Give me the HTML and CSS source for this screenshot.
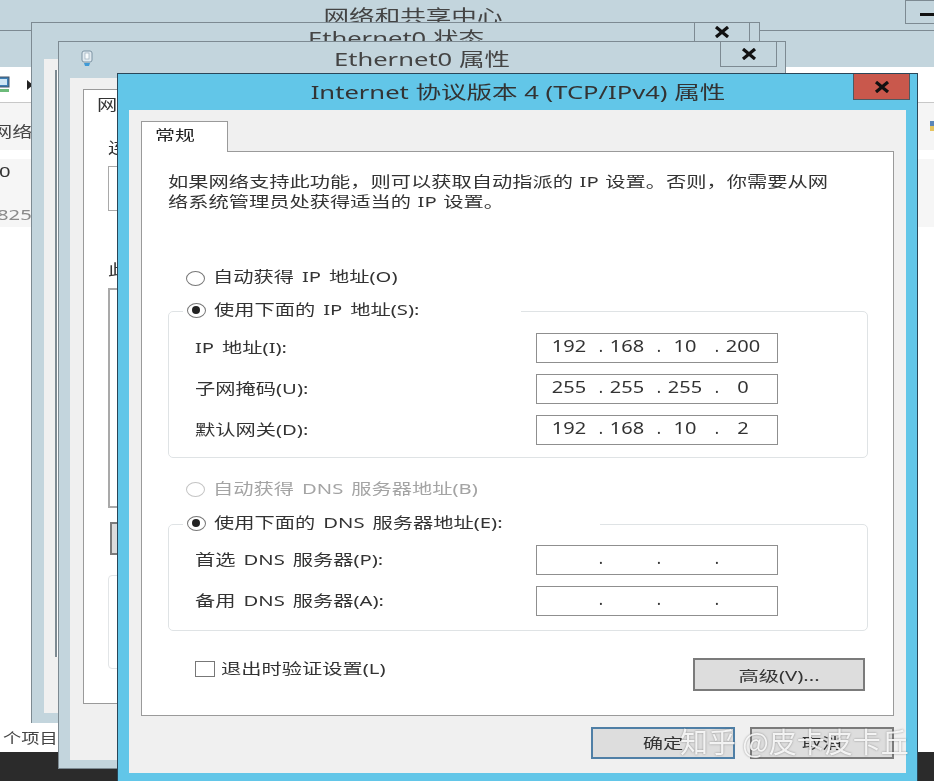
FILE: index.html
```html
<!DOCTYPE html>
<html lang="zh-CN">
<head>
<meta charset="utf-8">
<title>Internet 协议版本 4 (TCP/IPv4) 属性</title>
<link rel="stylesheet" href="styles.css">
</head>
<body>
<div class="desk">

  <section class="win win-top">
    <div class="win-title top-title"><span class="wc">网络和共享中心</span></div>
    <div class="min-btn"><i></i></div>
  </section>

  <section class="win win-explorer">
    <div class="explorer-body">
      <div class="toolbar">
        <svg class="net-icon" viewBox="0 0 14 18"><rect x="0" y="1" width="12" height="10" fill="#3d7fb5" stroke="#456" stroke-width="1"/><rect x="2" y="3" width="8" height="6" fill="#cfe6f5"/><rect x="0" y="13" width="12" height="3" fill="#6dbb7a"/></svg>
        <svg class="crumb" viewBox="0 0 6 10"><path d="M0 0 L6 5 L0 10Z" fill="#222"/></svg>
      </div>
      <div class="band band-a"><span class="w net-label">网络设置</span><svg class="side-icon" viewBox="0 0 4 10"><rect width="4" height="5" fill="#5b86b8"/><rect y="5" width="4" height="5" fill="#e6c45e"/></svg></div>
      <div class="band-b">
        <div class="row-zero"><span class="w">0</span></div>
        <div class="row-num"><span class="w grey">825</span></div>
      </div>
      <div class="grow"></div>
      <div class="status"><span class="w">个项目</span></div>
    </div>
  </section>

  <section class="win win-status">
    <div class="win-title status-title"><span class="wc">Ethernet0 状态</span></div>
    <div class="x-btn status-x"><svg viewBox="0 0 16 12"><path d="M2 1 L14 11 M14 1 L2 11" stroke="#111" stroke-width="3.2"/></svg></div>
    <div class="status-client"><div class="status-panel"></div></div>
  </section>

  <section class="win win-prop">
    <div class="win-title prop-title">
      <svg class="adapter" viewBox="0 0 14 18"><rect x="2" y="1" width="10" height="11" rx="2" fill="#dfe9ef" stroke="#7c93a3"/><rect x="5" y="3" width="4" height="6" fill="#f7fbfd" stroke="#8fa4b2" stroke-width=".6"/><path d="M4 13h6l-1 3H5z" fill="#3f9ad6"/></svg>
      <span class="wc">Ethernet0 属性</span>
    </div>
    <div class="x-btn prop-x"><svg viewBox="0 0 16 12"><path d="M2 1 L14 11 M14 1 L2 11" stroke="#111" stroke-width="3.2"/></svg></div>
    <div class="prop-client">
      <div class="prop-panel">
        <div class="prop-tab"><span class="w">网络</span></div>
        <div class="prop-connect"><span class="w">连接时使用</span></div>
        <div class="prop-box prop-box-a"></div>
        <div class="prop-use"><span class="w">此连接使用</span></div>
        <div class="prop-box prop-box-b"></div>
        <div class="prop-btn"></div>
        <div class="prop-box prop-box-c"></div>
      </div>
    </div>
  </section>

  <section class="win dialog">
    <header class="dialog-title"><span class="wc">Internet 协议版本 4 (TCP/IPv4) 属性</span></header>
    <div class="close-btn"><svg viewBox="0 0 16 12"><path d="M2 1 L14 11 M14 1 L2 11" stroke="#111" stroke-width="3.2"/></svg></div>
    <div class="client">
      <div class="tabs"><div class="tab"><span class="w">常规</span></div></div>
      <div class="panel">
        <p class="intro"><span class="w">如果网络支持此功能，则可以获取自动指派的 IP 设置。否则，你需要从网</span><br><span class="w">络系统管理员处获得适当的 IP 设置。</span></p>

        <label class="radio first-radio"><i class="dot"></i><span class="w">自动获得 IP 地址(O)</span></label>

        <fieldset class="group group-ip">
          <legend class="legend legend-ip"><span class="radio"><i class="dot on"></i><span class="w">使用下面的 IP 地址(S):</span></span></legend>
          <div class="field"><span class="w">IP 地址(I):</span>
            <div class="ip"><b>192</b><u>.</u><b>168</b><u>.</u><b>10</b><u>.</u><b>200</b></div></div>
          <div class="field"><span class="w">子网掩码(U):</span>
            <div class="ip"><b>255</b><u>.</u><b>255</b><u>.</u><b>255</b><u>.</u><b>0</b></div></div>
          <div class="field"><span class="w">默认网关(D):</span>
            <div class="ip"><b>192</b><u>.</u><b>168</b><u>.</u><b>10</b><u>.</u><b>2</b></div></div>
        </fieldset>

        <label class="radio off-radio"><i class="dot faint"></i><span class="w">自动获得 DNS 服务器地址(B)</span></label>

        <fieldset class="group group-dns">
          <legend class="legend legend-dns"><span class="radio"><i class="dot on"></i><span class="w">使用下面的 DNS 服务器地址(E):</span></span></legend>
          <div class="field"><span class="w">首选 DNS 服务器(P):</span>
            <div class="ip"><b></b><u>.</u><b></b><u>.</u><b></b><u>.</u><b></b></div></div>
          <div class="field"><span class="w">备用 DNS 服务器(A):</span>
            <div class="ip"><b></b><u>.</u><b></b><u>.</u><b></b><u>.</u><b></b></div></div>
        </fieldset>

        <div class="bottom-row">
          <label class="check"><i class="box"></i><span class="w">退出时验证设置(L)</span></label>
          <div class="btn adv"><span class="wc">高级(V)...</span></div>
        </div>
      </div>
      <footer class="actions">
        <div class="btn btn-ok"><span class="wc">确定</span></div>
        <div class="btn"><span class="wc">取消</span></div>
      </footer>
    </div>
  </section>

  <div class="watermark">知乎 @皮卡皮卡丘</div>
</div>
</body>
</html>
```

FILE: styles.css
```css
* { box-sizing: border-box; }
html, body { margin: 0; padding: 0; background: #2b2b2b; }
.desk {
  position: relative;
  width: 934px;
  height: 781px;
  overflow: hidden;
  background: #2b2b2b;
  font: 15px/20px "Noto Sans", "Noto Sans CJK SC", sans-serif;
  color: #333;
  word-spacing: 2px;
  filter: blur(0.45px);
}
.w, .wc {
  display: inline-block;
  white-space: nowrap;
  transform: scaleX(1.35);
}
.w { transform-origin: left center; }
.wc { transform-origin: center center; }
.grey { color: #8a8a8a; }

.win { position: absolute; background: #c3d5dd; }
.win-title { position: relative; display: flex; justify-content: center; align-items: center; word-spacing: 0; }
.win-title .wc { transform: scaleX(1.42); }

.win-top { left: 0; top: 0; width: 934px; height: 40px; }
.top-title { height: 32px; font-size: 18px; color: #444; padding-right: 108px; }
.min-btn {
  position: absolute; left: 905px; top: 0; width: 40px; height: 24px;
  border: 1px solid #7d8a92; background: #c3d5dd;
}
.min-btn i { display: block; position: absolute; left: 14px; top: 12px; width: 14px; height: 3px; background: #111; }

.win-explorer {
  left: 0; top: 30px; width: 934px; height: 722px;
  border-top: 1px solid #7d8a92;
  padding-top: 36px;
}
.explorer-body { height: 100%; background: #fff; display: flex; flex-direction: column; }
.toolbar { height: 36px; flex: none; display: flex; align-items: center; border-bottom: 1px solid #c8c8c8; }
.net-icon { width: 14px; height: 18px; margin-left: -3px; }
.crumb { width: 6px; height: 10px; margin-left: 16px; }
.band { display: flex; align-items: center; }
.band-a { height: 47px; background: #f5f5f5; justify-content: space-between; padding-top: 8px; }
.net-label { margin-left: -8px; color: #444; }
.side-icon { width: 4px; height: 10px; margin-top: -10px; }
.band-b { height: 68px; margin-top: 9px; background: #f6f6f6; }
.row-zero { height: 24px; display: flex; align-items: center; }
.row-num { height: 44px; padding-top: 18px; display: flex; align-items: center; }
.row-zero .w { margin-left: -1px; }
.row-num .w { margin-left: -3px; }
.grow { flex: 1; }
.status { height: 23px; padding: 0 0 6px 3px; display: flex; align-items: center; color: #444; font-size: 14px; }
.status .w { transform: scaleX(1.3); }

.win-status {
  left: 31px; top: 22px; width: 729px; height: 701px;
  border: 1px solid #7d8a92; border-bottom: 0;
  padding: 36px 13px 10px 12px;
}
.status-title { position: absolute; left: 0; right: 0; top: 3px; height: 24px; font-size: 18px; color: #444; }
.status-client { height: 100%; background: #f0f0f0; padding: 11px 0 56px 11px; }
.status-panel { height: 100%; border-left: 2px solid #7d8a92; background: #fff; }
.x-btn {
  position: absolute; display: flex; align-items: center; justify-content: center;
  border: 1px solid #7d8a92; border-top: 0; background: #c3d5dd;
}
.x-btn svg { width: 16px; height: 12px; }
.status-x { left: 662px; top: 0; width: 56px; height: 19px; }

.win-prop {
  left: 58px; top: 41px; width: 728px; height: 728px;
  border: 1px solid #7d8a92;
  padding: 36px 10px 8px 11px;
}
.prop-title { position: absolute; left: 0; right: 0; top: 4px; height: 26px; font-size: 18px; color: #444; }
.adapter { position: absolute; left: 21px; top: 3px; width: 14px; height: 20px; }
.prop-x { left: 661px; top: 0; width: 57px; height: 25px; }
.prop-client { height: 100%; background: #f0f0f0; padding: 11px 0 56px 13px; }
.prop-panel { height: 100%; background: #fff; border: 1px solid #9a9a9a; padding: 5px 0 0 24px; }
.prop-tab { position: absolute; left: 38px; top: 52px; }
.prop-connect { margin-top: 42px; color: #333; }
.prop-box { border: 1px solid #a9a9a9; background: #fff; }
.prop-box-a { height: 45px; margin-top: 9px; }
.prop-use { margin-top: 48px; }
.prop-box-b { height: 220px; margin-top: 9px; border-width: 2px; }
.prop-btn { height: 33px; margin: 14px 0 0 2px; border: 2px solid #7b7b7b; background: #dcdcdc; }
.prop-box-c { height: 94px; margin-top: 20px; border-color: #e2e5e7; border-radius: 4px; }

.dialog {
  left: 117px; top: 73px; width: 801px; height: 708px;
  background: #62c6e8;
  border: 1px solid #2a4658;
  border-bottom: 0;
}
.dialog-title { height: 36px; display: flex; align-items: center; justify-content: center; font-size: 18px; color: #333; word-spacing: 0; }
.dialog-title .wc { transform: scaleX(1.42); }
.close-btn {
  position: absolute; left: 735px; top: 0; width: 57px; height: 26px;
  display: flex; align-items: center; justify-content: center;
  background: #c9584c; border: 1px solid #4c5a62; border-top: 0;
}
.close-btn svg { width: 16px; height: 12px; }
.client { margin: 0 11px; height: 663px; background: #f0f0f0; padding: 11px 12px 0; }
.tabs { height: 30px; display: flex; }
.tab {
  position: relative; width: 87px; height: 31px; z-index: 1;
  background: #fff; border: 1px solid #9a9a9a; border-bottom: 0;
  padding: 3px 0 0 13px; font-size: 14px; color: #222;
}
.tab .w { transform: scaleX(1.42); }
.panel { height: 565px; background: #fff; border: 1px solid #9a9a9a; }
.intro { margin: 19px 0 0 26px; color: #333; word-spacing: 1px; }

.radio { display: flex; align-items: center; height: 20px; }
.radio .w { margin-left: 8px; }
.dot {
  display: block; flex: none; position: relative;
  width: 19px; height: 15px; border: 1.5px solid #777; border-radius: 50%; background: #fff; margin-top: 3px;
}
.dot.on::after {
  content: ""; position: absolute; left: 4px; top: 2px; width: 8px; height: 8px;
  border-radius: 50%; background: #222;
}
.dot.faint { border-color: #c4c4c4; }
.first-radio { margin: 56px 0 0 44px; }
.first-radio .w { margin-bottom: 2px; }
.off-radio { margin: 20px 0 0 44px; color: #a4a4a4; }

.group {
  margin: 12px 0 0 26px; padding: 0 0 12px 26px; width: 700px;
  border: 1px solid #dfe3e5; border-radius: 5px; min-width: 0;
}
.group-ip { padding-top: 10px; }
.group-dns { margin-top: 14px; padding-top: 9px; padding-bottom: 14px; }
.legend { margin-left: -12px; padding: 0 0 4px 4px; height: 24px; background: #fff; }
.legend-ip { width: 338px; }
.legend-dns { width: 417px; }
.field {
  display: grid; grid-template-columns: 341px 242px; align-items: center;
  height: 30px; margin-bottom: 11px;
}
.field > .w { margin-bottom: 2px; }
.field:last-child { margin-bottom: 0; }
.ip {
  height: 30px; border: 1.5px solid #8f8f8f; background: #fff;
  display: grid; grid-template-columns: 48px 10px 48px 10px 48px 10px 48px;
  padding: 0 0 5px 8px; align-items: center; color: #333; font-size: 16px;
}
.ip b { font-weight: 400; text-align: center; display: block; transform: scaleX(1.25); }
.ip u { text-decoration: none; text-align: right; }

.bottom-row { display: flex; justify-content: space-between; align-items: flex-start; margin: 27px 28px 0 53px; }
.check { display: flex; align-items: center; height: 20px; }
.check .w { margin-left: 6px; }
.box { display: block; width: 20px; height: 16px; border: 1.5px solid #777; background: #fff; margin-top: 2px; }

.btn {
  width: 144px; height: 32px; display: flex; align-items: center; justify-content: center;
  background: #dddddd; border: 2px solid #7b7b7b; font-size: 14px; color: #333;
}
.btn .wc { transform: scaleX(1.45); }
.adv { width: 172px; height: 33px; padding-top: 2px; }
.actions { display: flex; justify-content: flex-end; gap: 15px; margin-top: 11px; }
.btn-ok { border-color: #4f7fa6; }

.watermark {
  position: absolute; left: 680px; top: 725px;
  font: 28px/32px "Noto Sans CJK SC", "Noto Sans", sans-serif;
  word-spacing: 0;
  color: rgba(255, 255, 255, .88);
  text-shadow: 0 0 2px rgba(60, 60, 60, .55);
  white-space: nowrap;
}
```
